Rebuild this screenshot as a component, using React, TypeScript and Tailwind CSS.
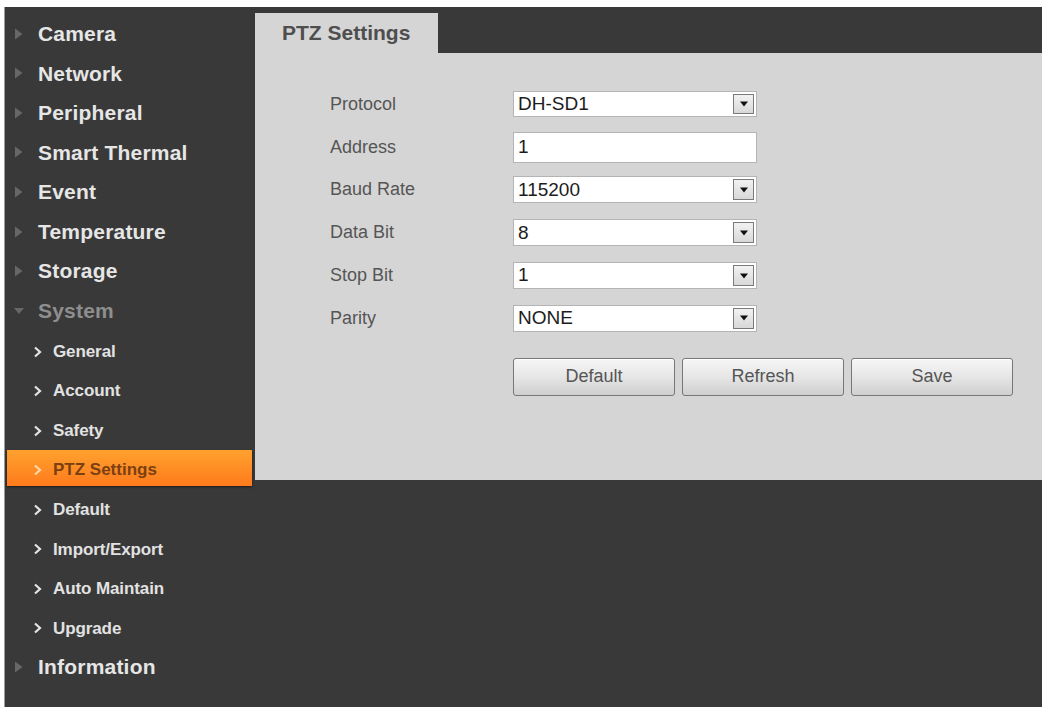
import React from 'react';

type NavItem = { label: string; level: 0 | 1; open?: boolean; active?: boolean; dim?: boolean };

const nav: NavItem[] = [
  { label: 'Camera', level: 0 },
  { label: 'Network', level: 0 },
  { label: 'Peripheral', level: 0 },
  { label: 'Smart Thermal', level: 0 },
  { label: 'Event', level: 0 },
  { label: 'Temperature', level: 0 },
  { label: 'Storage', level: 0 },
  { label: 'System', level: 0, open: true, dim: true },
  { label: 'General', level: 1 },
  { label: 'Account', level: 1 },
  { label: 'Safety', level: 1 },
  { label: 'PTZ Settings', level: 1, active: true },
  { label: 'Default', level: 1 },
  { label: 'Import/Export', level: 1 },
  { label: 'Auto Maintain', level: 1 },
  { label: 'Upgrade', level: 1 },
  { label: 'Information', level: 0 },
];

const fields = [
  { label: 'Protocol', value: 'DH-SD1', select: true, h: 'h-[26px]' },
  { label: 'Address', value: '1', select: false, h: 'h-[31px]' },
  { label: 'Baud Rate', value: '115200', select: true, h: 'h-[27px]' },
  { label: 'Data Bit', value: '8', select: true, h: 'h-[27px]' },
  { label: 'Stop Bit', value: '1', select: true, h: 'h-[27px]' },
  { label: 'Parity', value: 'NONE', select: true, h: 'h-[27px]' },
];

function Caret({ open }: { open?: boolean }) {
  return (
    <svg width="12" height="14" viewBox="0 0 12 14" className="shrink-0">
      {open ? (
        <polygon points="1,4 11,4 6,10" fill="#676767" />
      ) : (
        <polygon points="2,1.5 9.5,7 2,12.5" fill="#676767" />
      )}
    </svg>
  );
}

function Chevron({ color }: { color: string }) {
  return (
    <svg width="9" height="12" viewBox="0 0 9 12" className="shrink-0">
      <polyline points="2,1.5 7,6 2,10.5" fill="none" stroke={color} strokeWidth="2.2" />
    </svg>
  );
}

function SideNav() {
  return (
    <div className="w-[250px] shrink-0 pt-[7px] flex flex-col">
      {nav.map((item) => {
        if (item.level === 0) {
          return (
            <div key={item.label} className="h-[39.56px] flex items-center pl-[8px]">
              <Caret open={item.open} />
              <span
                className={`ml-[13px] text-[21px] font-bold tracking-[0.2px] ${item.dim ? 'text-[#8e8e8e]' : 'text-[#e6e6e6]'}`}
              >
                {item.label}
              </span>
            </div>
          );
        }
        if (item.active) {
          return (
            <div key={item.label} className="h-[39.56px] flex items-start">
              <div className="ml-[2px] mr-[3px] mt-[1px] w-full h-[36px] flex items-center pt-[3px] pl-[26px] bg-gradient-to-b from-[#ffa12e] to-[#ff7a1c] shadow-[0_1px_2px_rgba(0,0,0,0.5)]">
                <Chevron color="#ffd9a8" />
                <span className="ml-[11px] text-[17px] font-bold text-[#7a4012]">{item.label}</span>
              </div>
            </div>
          );
        }
        return (
          <div key={item.label} className="h-[39.56px] flex items-center pl-[28px] pt-[3px]">
            <Chevron color="#e6e6e6" />
            <span className="ml-[11px] text-[17px] font-bold text-[#e2e2e2] tracking-[-0.1px]">{item.label}</span>
          </div>
        );
      })}
    </div>
  );
}

function DropButton() {
  return (
    <div className="w-[21px] self-stretch my-[2px] mr-[2px] border border-[#7a7a7a] bg-gradient-to-b from-[#f2f2f2] to-[#d8d8d8] flex items-center justify-center">
      <svg width="10" height="6" viewBox="0 0 10 6">
        <polygon points="1,0.5 9,0.5 5,5.5" fill="#111" />
      </svg>
    </div>
  );
}

function PtzForm() {
  return (
    <div className="pl-[75px] pt-[30px]">
      <div className="flex flex-col">
        {fields.map((f) => (
          <div key={f.label} className="h-[42.8px] flex items-center">
            <div className="w-[183px] text-[18px] text-[#555]">{f.label}</div>
            <div
              className={`w-[244px] ${f.h} bg-white border border-[#b4b4b4] flex items-center pl-[4px] justify-between`}
            >
              <span className="text-[19px] text-[#1c1c1c]">{f.value}</span>
              {f.select && <DropButton />}
            </div>
          </div>
        ))}
      </div>
      <div className="flex gap-[7px] ml-[183px] mt-[18px]">
        {['Default', 'Refresh', 'Save'].map((b) => (
          <button
            key={b}
            className="w-[162px] h-[38px] rounded-[3px] border border-[#777] bg-gradient-to-b from-[#f6f6f6] via-[#e6e6e6] to-[#cfcfcf] text-[18px] text-[#555] shadow-[inset_0_1px_0_#fff]"
          >
            {b}
          </button>
        ))}
      </div>
    </div>
  );
}

export default function App() {
  return (
    <div className="w-[1045px] h-[707px] bg-white pt-[7px] pl-[4px] font-['Liberation_Sans',Arial,sans-serif]">
      <div className="w-[1038px] h-[700px] bg-[#393939] border-l border-[#9a9a9a] flex">
        <SideNav />
        <div className="w-[787px] flex flex-col">
          <div className="h-[46px] flex items-end">
            <div className="w-[183px] h-[40px] bg-[#d5d5d5] flex items-center pl-[27px] text-[21px] font-bold text-[#4e4e4e]">
              PTZ Settings
            </div>
          </div>
          <div className="h-[427px] bg-[#d5d5d5]">
            <PtzForm />
          </div>
        </div>
      </div>
    </div>
  );
}
